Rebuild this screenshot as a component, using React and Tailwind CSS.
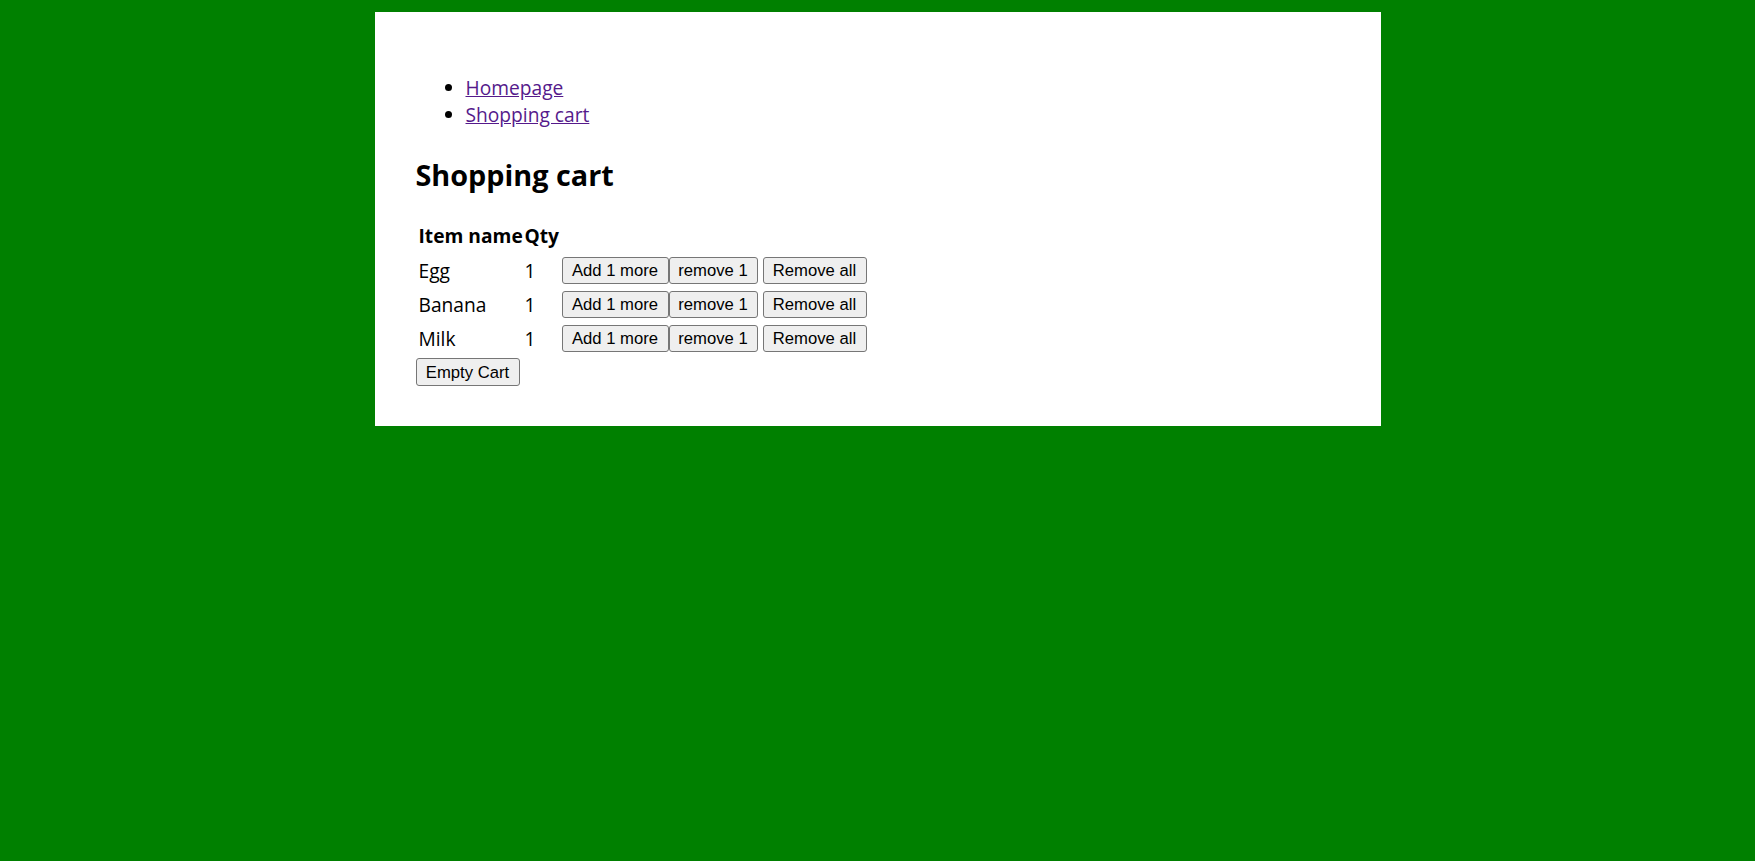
export default function App() {
  const items = ["Egg", "Banana", "Milk"];
  const font = { fontFamily: '"Segoe UI", "Open Sans", "Noto Sans", sans-serif' };
  const btn =
    "h-[27px] bg-[#efefef] border border-[#767676] rounded-[3px] text-[16.67px] leading-[19px] text-black font-['Liberation_Sans',Arial,sans-serif] flex items-center justify-center whitespace-nowrap";
  return (
    <div className="min-h-screen bg-[#008000] pt-[12px] text-black" style={font}>
      <div className="w-[1006px] mx-auto bg-white pl-[41px] pr-[41px] pt-[62px] pb-[40px]">
        <ul className="list-disc pl-[50px] text-[19.2px] leading-[27px]">
          <li>
            <a href="#" className="text-[#551a8b] underline">Homepage</a>
          </li>
          <li>
            <a href="#" className="text-[#551a8b] underline">Shopping cart</a>
          </li>
        </ul>
        <h2 className="mt-[27px] h-[40px] text-[28.8px] leading-[40px] font-bold">Shopping cart</h2>
        <div className="mt-[27px] flex flex-col text-[19.2px] whitespace-nowrap">
          <div className="flex h-[27px] leading-[27px] font-bold pl-[3px]">
            <div className="w-[106px]">Item name</div>
            <div className="w-[37px]">Qty</div>
          </div>
          {items.map((name, i) => (
            <div key={name} className={`flex h-[34px] items-center pl-[3px] ${i === 0 ? "mt-[4px]" : ""}`}>
              <div className="w-[106px] leading-[27px]">{name}</div>
              <div className="w-[37px] leading-[27px]">1</div>
              <div className="flex">
                <button className={`${btn} w-[107px]`}>Add 1 more</button>
                <button className={`${btn} w-[89px]`}>remove 1</button>
              </div>
              <button className={`${btn} w-[104px] ml-[5px]`}>Remove all</button>
            </div>
          ))}
          <div className="mt-[3px] flex">
            <button className={`${btn} w-[104px] h-[28px]`}>Empty Cart</button>
          </div>
        </div>
      </div>
    </div>
  );
}
